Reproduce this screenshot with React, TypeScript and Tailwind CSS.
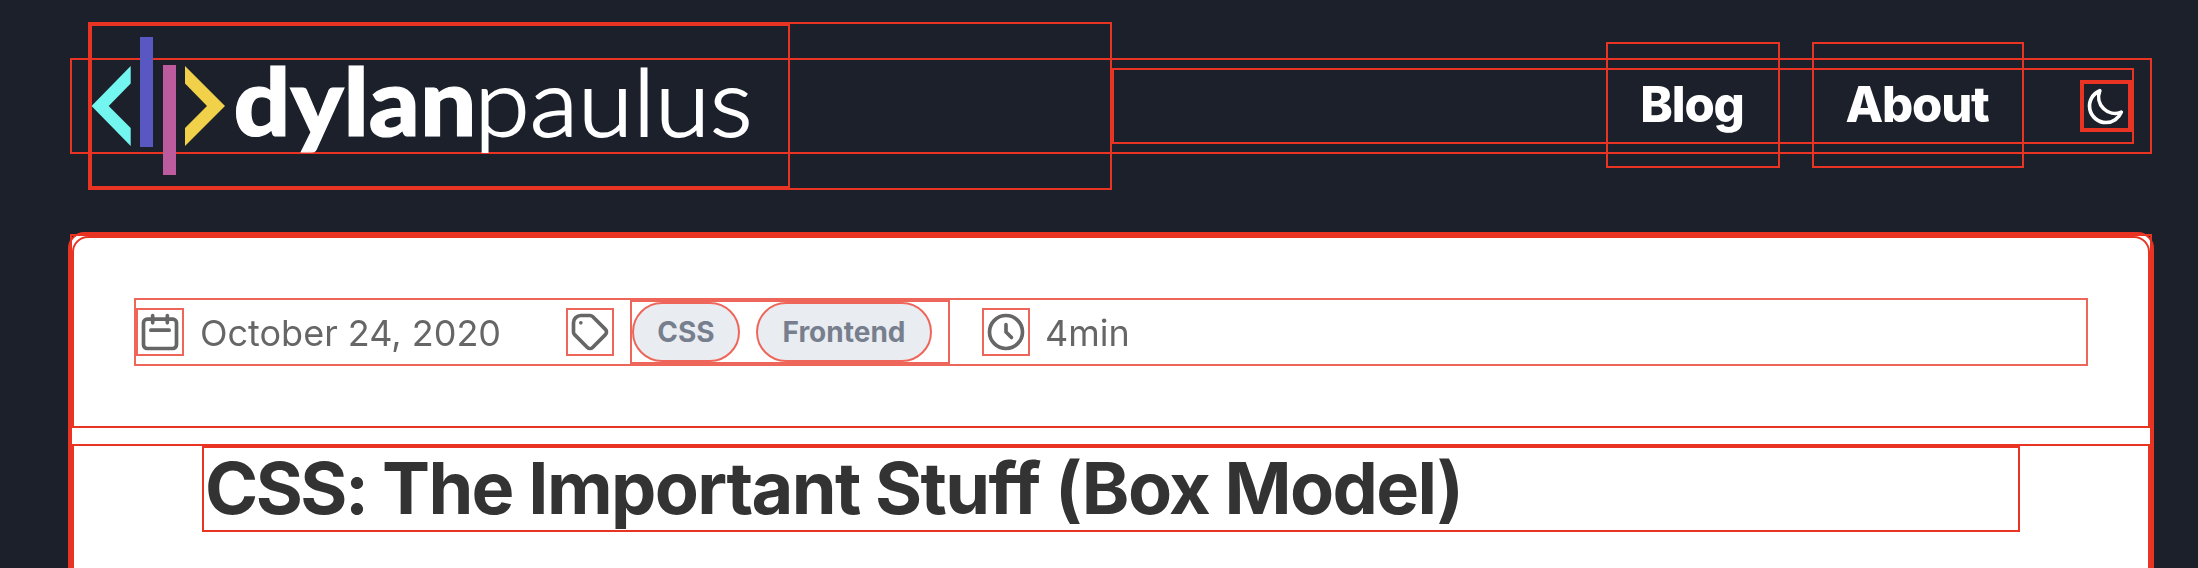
import React from "react";

const red = "border-2 border-[#e93323]";

function Logo() {
  return (
    <svg viewBox="0 0 696 160" className="block h-full w-full font-['Lato',sans-serif]">
      <path d="M38.7 40 L-0.4 80 L38.7 120 V102 L16.7 80 L38.7 57.5Z" fill="#72f6ef" />
      <rect x="48" y="11" width="13" height="110" fill="#5957c1" />
      <rect x="71" y="39" width="13" height="110" fill="#bc5b9e" />
      <path d="M93 40 L133 80 L93 120 V102 L115 80 L93 57.5Z" fill="#f1d149" />
      <text x="141.500" y="110" fontSize="93" fontWeight="900" fill="#fff" stroke="#fff" strokeWidth="1.2" textLength="243" lengthAdjust="spacingAndGlyphs">dylan</text>
      <text x="382.500" y="110" fontSize="93" fontWeight="300" fill="#fff" stroke="#fff" strokeWidth="1.8" textLength="278" lengthAdjust="spacingAndGlyphs">paulus</text>
    </svg>
  );
}

function MoonIcon() {
  return (
    <svg viewBox="0 0 24 24" fill="none" stroke="#fff" strokeWidth="2" strokeLinecap="round" strokeLinejoin="round" className={`block size-[48px] ${red}`}>
      <path d="M20.354 15.354A9 9 0 018.646 3.646 9.003 9.003 0 0012 21a9.003 9.003 0 008.354-5.646z" />
    </svg>
  );
}

function MetaIcon({ children }: { children: React.ReactNode }) {
  return (
    <svg viewBox="0 0 24 24" fill="none" stroke="#333" strokeWidth="2" strokeLinecap="round" strokeLinejoin="round" className={`block size-[48px] shrink-0 ${red}`}>
      {children}
    </svg>
  );
}

function NavLink({ children, className }: { children: string; className: string }) {
  return (
    <a className={`mb-0.5 flex h-[126px] shrink-0 items-center justify-center pr-0.5 text-[49px] font-extrabold tracking-[-0.024em] text-white ${red} ${className}`}>
      {children}
    </a>
  );
}

function Pill({ children, className }: { children: string; className: string }) {
  return (
    <span className={`mr-4 flex h-[60px] items-center justify-center rounded-full bg-[#e2e6ed] text-[28px] font-bold text-[#4a5568] ${red} ${className}`}>
      {children}
    </span>
  );
}

export default function App() {
  return (
    <div className="h-[568px] w-[2198px] overflow-hidden bg-[#1c202a] pt-[58px] font-['Inter',sans-serif]">
      <nav className={`ml-[70px] flex h-[96px] w-[2082px] items-center px-4 ${red}`}>
        <div className={`h-[168px] w-[1024px] shrink-0 ${red}`}>
          <div className={`h-[164px] w-[700px] ${red}`}>
            <Logo />
          </div>
        </div>
        <div className={`flex h-[76px] w-[1022px] shrink-0 items-center justify-end ${red}`}>
          <NavLink className="mr-8 w-[174px]">Blog</NavLink>
          <NavLink className="mr-14 w-[212px]">About</NavLink>
          <button className={`size-[52px] shrink-0 ${red}`}>
            <MoonIcon />
          </button>
        </div>
      </nav>
      <div className={`mt-[78px] ml-[68px] h-[400px] w-[2086px] rounded-[16px] bg-white ${red}`}>
        <article className={`h-[420px] ${red}`}>
          <header className={`h-[192px] rounded-t-[16px] px-[60px] pt-[60px] ${red}`}>
            <div className={`flex h-[68px] w-[1954px] items-center text-[36px] text-[#333] opacity-75 ${red}`}>
              <MetaIcon>
                <path d="M8 7V3m8 4V3m-9 8h10M5 21h14a2 2 0 002-2V7a2 2 0 00-2-2H5a2 2 0 00-2 2v12a2 2 0 002 2z" />
              </MetaIcon>
              <span className="ml-4 w-[366px] pt-0.5">October 24, 2020</span>
              <MetaIcon>
                <path d="M7 7h.01M7 3h5c.512 0 1.024.195 1.414.586l7 7a2 2 0 010 2.828l-7 7a2 2 0 01-2.828 0l-7-7A1.994 1.994 0 013 12V7a4 4 0 014-4z" />
              </MetaIcon>
              <div className={`ml-4 flex h-[64px] w-[320px] ${red}`}>
                <Pill className="w-[108px]">CSS</Pill>
                <Pill className="w-[176px]">Frontend</Pill>
              </div>
              <div className="ml-8 flex items-center">
                <MetaIcon>
                  <path d="M12 8v4l3 3m6-3a9 9 0 11-18 0 9 9 0 0118 0z" />
                </MetaIcon>
                <span className="ml-[15px] pt-0.5">4min</span>
              </div>
            </div>
          </header>
          <section className={`mt-4 h-[200px] px-[128px] ${red}`}>
            <h1 className={`h-[86px] pl-px text-[72px] leading-[80px] font-bold tracking-[-0.0225em] whitespace-nowrap text-[#333] ${red}`}>
              <span className="tracking-[-0.035em]">CSS:</span> The Important Stuff (Box Model)
            </h1>
          </section>
        </article>
      </div>
    </div>
  );
}
